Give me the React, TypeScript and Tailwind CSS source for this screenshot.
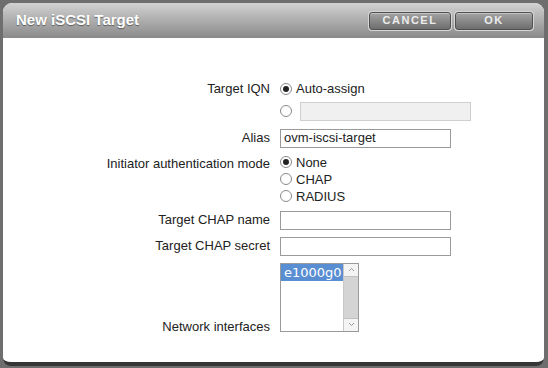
import React from 'react'

const font = { fontFamily: '"Liberation Sans", Arial, sans-serif' }

function Radio({ checked }: { checked?: boolean }) {
  return (
    <span className="flex h-[12px] w-[12px] shrink-0 items-center justify-center rounded-full border border-[#8a8a8a] bg-white">
      {checked && <span className="h-[6px] w-[6px] rounded-full bg-[#222]" />}
    </span>
  )
}

function Label({ children }: { children: React.ReactNode }) {
  return <div className="text-right text-[13px] text-[#222]">{children}</div>
}

function TextBox({ value, className = '' }: { value?: string; className?: string }) {
  return (
    <div className={`flex h-[19px] w-[171px] items-center border border-[#9a9a9a] bg-white px-[3px] text-[13px] text-[#222] ${className}`}>
      {value}
    </div>
  )
}

function Btn({ label, w }: { label: string; w: string }) {
  return (
    <div className={`rounded-[4px] bg-[#d6d6d6] p-[1px] ${w}`}>
      <div className="flex h-[18px] items-center justify-center rounded-[3px] border border-[#505050] bg-gradient-to-b from-[#a4a4a4] to-[#6e6e6e] text-[11px] font-bold tracking-[1.5px] text-[#ececec] shadow-[inset_0_1px_0_rgba(255,255,255,0.35)]">
        {label}
      </div>
    </div>
  )
}

export default function App() {
  return (
    <div className="h-[368px] w-[548px] overflow-hidden bg-[#6e6e6e] pt-[3px] pl-[3px]" style={font}>
      <div className="flex h-[363px] w-[541px] flex-col overflow-hidden rounded-t-[9px] rounded-b-[8px] border-b-4 border-[#363636] bg-white">
        <div className="flex h-[35px] shrink-0 items-center bg-gradient-to-b from-[#d2d2d2] to-[#8a8a8a] pl-[13px] pr-[10px]">
          <div className="flex-1 text-[15px] font-bold text-white [text-shadow:0_1px_1px_rgba(0,0,0,0.45)]">
            New iSCSI Target
          </div>
          <div className="flex gap-[2px]">
            <Btn label="CANCEL" w="w-[84px]" />
            <Btn label="OK" w="w-[80px]" />
          </div>
        </div>

        <div className="grid grid-cols-[267px_1fr] gap-x-[10px] pt-[41px] text-[13px] text-[#222]">
          <Label>Target IQN</Label>
          <div className="flex items-center gap-[4px]">
            <Radio checked />
            <span>Auto-assign</span>
          </div>

          <div />
          <div className="mt-[3px] flex items-center gap-[8px]">
            <Radio />
            <div className="h-[19px] w-[171px] border border-[#cfcfcf] bg-[#f0f0f0]" />
          </div>

          <div className="mt-[8px] flex h-[19px] items-center justify-end">
            <Label>Alias</Label>
          </div>
          <div className="mt-[8px]">
            <TextBox value="ovm-iscsi-target" className="border-[#7fa6d6]" />
          </div>

          <div className="mt-[6px]">
            <Label>Initiator authentication mode</Label>
          </div>
          <div className="mt-[6px] flex flex-col leading-[17px]">
            <div className="flex items-center gap-[4px]">
              <Radio checked />
              <span>None</span>
            </div>
            <div className="flex items-center gap-[4px]">
              <Radio />
              <span>CHAP</span>
            </div>
            <div className="flex items-center gap-[4px]">
              <Radio />
              <span>RADIUS</span>
            </div>
          </div>

          <div className="mt-[6px] flex h-[19px] items-center justify-end">
            <Label>Target CHAP name</Label>
          </div>
          <div className="mt-[6px]">
            <TextBox />
          </div>

          <div className="mt-[7px] flex h-[19px] items-center justify-end">
            <Label>Target CHAP secret</Label>
          </div>
          <div className="mt-[7px]">
            <TextBox />
          </div>

          <div className="mt-[7px] flex h-[69px] items-end justify-end leading-[11px]">
            <Label>Network interfaces</Label>
          </div>
          <div className="mt-[7px]">
            <div className="flex h-[69px] w-[79px] border border-[#9a9a9a] bg-white">
              <div className="flex-1">
                <div className="h-[17px] bg-[#5a8ed3] pl-[3px] text-[13px] leading-[17px] text-white" style={{ fontFamily: '"DejaVu Sans", sans-serif' }}>
                  e1000g0
                </div>
              </div>
              <div className="flex w-[15px] flex-col border-l border-[#c8c8c8] bg-[#e4e4e4]">
                <div className="flex h-[13px] items-center justify-center border-b border-[#c0c0c0] bg-[#f4f4f4]">
                  <svg width="7" height="5" viewBox="0 0 7 5"><path d="M1 4 L3.5 1.5 L6 4" fill="none" stroke="#999" strokeWidth="1" /></svg>
                </div>
                <div className="flex-1 bg-[#d4d4d4]" />
                <div className="flex h-[13px] items-center justify-center border-t border-[#c0c0c0] bg-[#f4f4f4]">
                  <svg width="7" height="5" viewBox="0 0 7 5"><path d="M1 1 L3.5 3.5 L6 1" fill="none" stroke="#999" strokeWidth="1" /></svg>
                </div>
              </div>
            </div>
          </div>
        </div>
      </div>
    </div>
  )
}
